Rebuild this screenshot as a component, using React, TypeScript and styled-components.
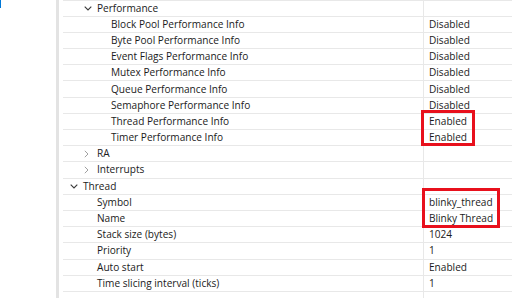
import React from "react";
import styled, { createGlobalStyle } from "styled-components";

type Row = {
  label: string;
  value?: string;
  level: number;
  expander?: "open" | "closed";
};

const rows: Row[] = [
  { label: "Performance", level: 1, expander: "open" },
  { label: "Block Pool Performance Info", value: "Disabled", level: 2 },
  { label: "Byte Pool Performance Info", value: "Disabled", level: 2 },
  { label: "Event Flags Performance Info", value: "Disabled", level: 2 },
  { label: "Mutex Performance Info", value: "Disabled", level: 2 },
  { label: "Queue Performance Info", value: "Disabled", level: 2 },
  { label: "Semaphore Performance Info", value: "Disabled", level: 2 },
  { label: "Thread Performance Info", value: "Enabled", level: 2 },
  { label: "Timer Performance Info", value: "Enabled", level: 2 },
  { label: "RA", level: 1, expander: "closed" },
  { label: "Interrupts", level: 1, expander: "closed" },
  { label: "Thread", level: 0, expander: "open" },
  { label: "Symbol", value: "blinky_thread", level: 1 },
  { label: "Name", value: "Blinky Thread", level: 1 },
  { label: "Stack size (bytes)", value: "1024", level: 1 },
  { label: "Priority", value: "1", level: 1 },
  { label: "Auto start", value: "Enabled", level: 1 },
  { label: "Time slicing interval (ticks)", value: "1", level: 1 },
  { label: "", level: 0 },
];

const GlobalStyle = createGlobalStyle`
  html, body {
    margin: 0;
    padding: 0;
    background: #ffffff;
    overflow: hidden;
  }
  body {
    font-family: "Open Sans", "Noto Sans", sans-serif;
    font-size: 10.1px;
    color: #1b1b1b;
  }
`;

const Chevron: React.FC<{ open: boolean }> = ({ open }) =>
  open ? (
    <svg width="8" height="5" viewBox="0 0 8 5">
      <polyline points="0.7,0.7 4,4 7.3,0.7" fill="none" stroke="#3a3a3a" strokeWidth="1.1" />
    </svg>
  ) : (
    <svg width="5" height="8" viewBox="0 0 5 8">
      <polyline points="0.8,0.8 4,4 0.8,7.2" fill="none" stroke="#a0a0a0" strokeWidth="1" />
    </svg>
  );

const App: React.FC = () => {
  return (
    <>
      <GlobalStyle />
      <Page>
        <LeftPane>
          <FocusMark />
        </LeftPane>
        <Splitter />
        <TreePane>
          <Table>
            {rows.map((row, i) => (
              <TreeRow key={i}>
                <NameCell>
                  <Indent $level={row.level} />
                  <Expander>{row.expander && <Chevron open={row.expander === "open"} />}</Expander>
                  <Label>{row.label}</Label>
                </NameCell>
                <ValueCell>{row.value}</ValueCell>
              </TreeRow>
            ))}
          </Table>
          <Highlight style={{ left: 362, top: 110, width: 54, height: 36 }} />
          <Highlight style={{ left: 363, top: 188, width: 78, height: 40 }} />
        </TreePane>
      </Page>
    </>
  );
};

export default App;

const Page = styled.div`
  display: flex;
  width: 512px;
  height: 298px;
  overflow: hidden;
  background: #ffffff;
`;

const LeftPane = styled.div`
  width: 56px;
  flex-shrink: 0;
  position: relative;
`;

const FocusMark = styled.div`
  position: absolute;
  left: 0;
  top: 0;
  width: 1px;
  height: 8px;
  background: #0078d7;
`;

const Splitter = styled.div`
  width: 3px;
  flex-shrink: 0;
  background: #e3e3e3;
`;

const TreePane = styled.div`
  flex: 1;
  position: relative;
  padding-left: 4px;
`;

const Table = styled.div`
  display: flex;
  flex-direction: column;
  border-top: 1px solid #e8e8e8;
  margin-top: -0.5px;
`;

const TreeRow = styled.div`
  display: grid;
  grid-template-columns: 361px 1fr;
  height: 16.2px;
  box-sizing: border-box;
  border-bottom: 1px solid #e8e8e8;
`;

const NameCell = styled.div`
  display: flex;
  align-items: center;
  border-right: 1px solid #e8e8e8;
  white-space: nowrap;
  overflow: hidden;
`;

const Indent = styled.div<{ $level: number }>`
  width: ${(p) => 6 + p.$level * 14}px;
  flex-shrink: 0;
`;

const Expander = styled.div`
  width: 14px;
  flex-shrink: 0;
  display: flex;
  align-items: center;
  padding-left: 1px;
  box-sizing: border-box;
`;

const Label = styled.span`
  line-height: 15px;
`;

const ValueCell = styled.div`
  display: flex;
  align-items: center;
  padding-left: 5px;
  line-height: 15px;
  white-space: nowrap;
`;

const Highlight = styled.div`
  position: absolute;
  box-sizing: border-box;
  border: 3px solid #e8101c;
  pointer-events: none;
`;
